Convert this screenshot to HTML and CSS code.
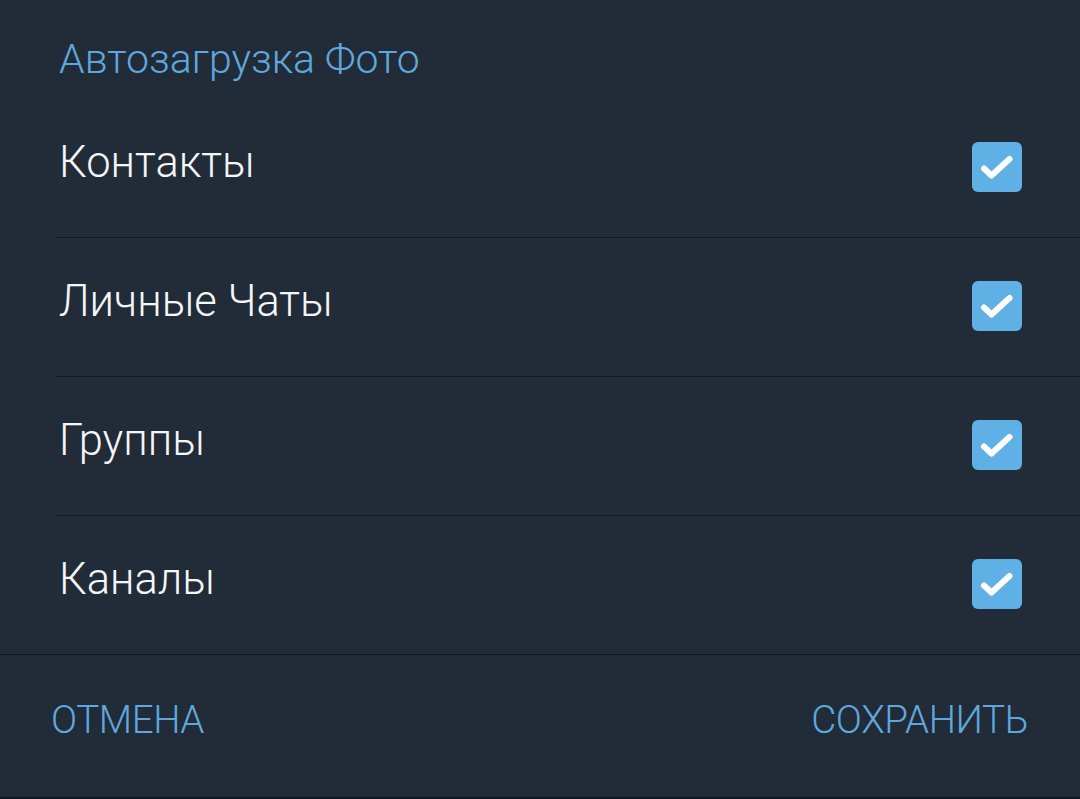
FILE: index.html
```html
<!DOCTYPE html>
<html lang="ru">

<head>
    <meta charset="UTF-8">
    <meta name="viewport" content="width=device-width, initial-scale=1.0">
    <title>Автозагрузка Фото</title>
    <link rel="stylesheet" href="styles.css">
</head>

<body>
    <div class="dialog">
        <h1 class="title">Автозагрузка Фото</h1>

        <ul class="options">
            <li class="option">
                <span class="label">Контакты</span>
                <span class="check">
                    <svg viewBox="0 0 50 50" width="50" height="50"><path d="M12 26.5 L19.5 33.5 L37.5 17" /></svg>
                </span>
            </li>
            <li class="option">
                <span class="label">Личные Чаты</span>
                <span class="check">
                    <svg viewBox="0 0 50 50" width="50" height="50"><path d="M12 26.5 L19.5 33.5 L37.5 17" /></svg>
                </span>
            </li>
            <li class="option">
                <span class="label">Группы</span>
                <span class="check">
                    <svg viewBox="0 0 50 50" width="50" height="50"><path d="M12 26.5 L19.5 33.5 L37.5 17" /></svg>
                </span>
            </li>
            <li class="option">
                <span class="label">Каналы</span>
                <span class="check">
                    <svg viewBox="0 0 50 50" width="50" height="50"><path d="M12 26.5 L19.5 33.5 L37.5 17" /></svg>
                </span>
            </li>
        </ul>

        <div class="actions">
            <button class="btn">ОТМЕНА</button>
            <button class="btn">СОХРАНИТЬ</button>
        </div>
    </div>
</body>

</html>
```

FILE: styles.css
```css
body {
    margin: 0;
    background: #0f151d;
    font-family: Roboto, "Liberation Sans", sans-serif;
    font-weight: 300;
}

.dialog {
    height: 797px;
    background: #222b38;
    border-bottom: 2px solid #10161e;
    display: flex;
    flex-direction: column;
}

.title {
    margin: 0;
    height: 99px;
    box-sizing: border-box;
    padding: 39px 0 0 59px;
    font-size: 41px;
    line-height: 1;
    font-weight: 300;
    color: #5ea8de;
}

.options {
    list-style: none;
    margin: 0;
    padding: 0;
}

.option {
    height: 139px;
    box-sizing: border-box;
    margin-left: 56px;
    padding: 0 58px 0 3px;
    border-bottom: 1px solid #121921;
    display: flex;
    align-items: center;
    justify-content: space-between;
}

.option:last-child {
    margin-left: 0;
    padding-left: 59px;
}

.label {
    font-size: 43.5px;
    color: #f4f6f8;
    margin-top: -11px;
}

.check {
    width: 50px;
    height: 50px;
    border-radius: 6px;
    background: #5eb0e5;
    display: block;
    margin-top: -2px;
}

.check svg {
    display: block;
}

.check path {
    fill: none;
    stroke: #ffffff;
    stroke-width: 6;
    stroke-linecap: round;
    stroke-linejoin: round;
}

.actions {
    flex: 1;
    display: flex;
    align-items: center;
    justify-content: space-between;
    padding: 0 52px 0 51px;
}

.btn {
    background: none;
    border: none;
    padding: 0;
    font-family: inherit;
    font-weight: 300;
    font-size: 38.5px;
    letter-spacing: -0.4px;
    color: #5ea8de;
    margin-top: -14px;
}
```
